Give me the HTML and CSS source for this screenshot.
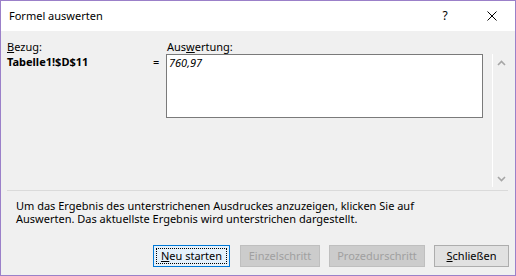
FILE: index.html
```html
<!DOCTYPE html>
<html lang="de">
<head>
<meta charset="utf-8">
<title>Formel auswerten</title>
<link rel="stylesheet" href="styles.css">
</head>
<body>
<div class="window">
  <div class="titlebar">
    <span class="title">Formel auswerten</span>
    <div class="caption-btns">
      <span class="cbtn help">?</span>
      <span class="cbtn close">
        <svg width="10" height="10" viewBox="0 0 10 10"><path d="M0.5 0.5 L9.5 9.5 M9.5 0.5 L0.5 9.5" stroke="#000" stroke-width="1" fill="none"/></svg>
      </span>
    </div>
  </div>
  <div class="content">
    <div class="eval">
      <div class="col-ref">
        <div class="lbl"><u>B</u>ezug:</div>
        <div class="ref">Tabelle1!$D$11</div>
      </div>
      <div class="col-eq">
        <div class="lbl"></div>
        <div class="eq">=</div>
      </div>
      <div class="col-val">
        <div class="lbl">Aus<u>w</u>ertung:</div>
        <div class="box"><span class="val">760,97</span></div>
      </div>
      <div class="col-scroll">
        <div class="lbl"></div>
        <div class="scroll">
          <svg class="chev" width="9" height="6" viewBox="0 0 9 6"><path d="M1 5 L4.5 1.5 L8 5" stroke="#a6a6a6" stroke-width="1.6" fill="none"/></svg>
          <svg class="chev" width="9" height="6" viewBox="0 0 9 6"><path d="M1 1 L4.5 4.5 L8 1" stroke="#a6a6a6" stroke-width="1.6" fill="none"/></svg>
        </div>
      </div>
    </div>
    <div class="sep"></div>
    <p class="hint"><span class="hl">Um das Ergebnis des unterstrichenen Ausdruckes anzuzeigen, klicken Sie auf</span><span class="hl">Auswerten. Das aktuellste Ergebnis wird unterstrichen dargestellt.</span></p>
    <div class="buttons">
      <button class="btn focus b1"><u>N</u>eu starten</button>
      <button class="btn disabled b2">Einzelschritt</button>
      <button class="btn disabled b3">Prozedurschritt</button>
      <button class="btn b4"><u>S</u>chließen</button>
    </div>
  </div>
</div>
</body>
</html>
```
FILE: styles.css
```css
html, body {
  margin: 0;
  padding: 0;
  background: #ffffff;
}
body {
  font-family: "Noto Sans", "Open Sans", sans-serif;
  font-size: 11px;
  color: #000;
}
.window {
  width: 516px;
  height: 276px;
  box-sizing: border-box;
  border: 1px solid #9b80c9;
  display: flex;
  flex-direction: column;
  overflow: hidden;
}
.titlebar {
  height: 30px;
  flex: none;
  background: #fff;
  display: flex;
  align-items: center;
}
.title {
  padding-left: 8px;
  padding-bottom: 1px;
  font-size: 11px;
  flex: 1;
}
.caption-btns {
  display: flex;
  height: 30px;
}
.cbtn {
  width: 46px;
  height: 30px;
  display: flex;
  align-items: center;
  justify-content: center;
}
.help {
  font-size: 12px;
  padding-bottom: 1px;
  padding-right: 2px;
  box-sizing: border-box;
}
.close svg { display: block; }
.content {
  flex: 1;
  background: #f0f0f0;
  display: flex;
  flex-direction: column;
  padding: 8px 0 8px 0;
}
.eval {
  display: flex;
  padding-left: 6px;
}
.lbl {
  height: 15px;
  line-height: 15px;
}
.col-ref { width: 146px; }
.ref {
  font-weight: bold;
  line-height: 15px;
}
.col-eq { width: 13px; }
.eq { line-height: 15px; }
.col-val { width: 317px; }
.col-val .lbl { padding-left: 1px; }
.box {
  height: 64px;
  box-sizing: border-box;
  border: 1px solid #7a7a7a;
  background: #fff;
  padding: 0 2px;
  line-height: 15px;
}
.val { font-style: italic; }
.col-scroll {
  width: 17px;
  margin-left: 9px;
}
.scroll {
  height: 133px;
  box-sizing: border-box;
  border-left: 1px solid #ffffff;
  display: flex;
  flex-direction: column;
  justify-content: space-between;
  align-items: center;
  padding: 6px 0 5px 0;
}
.chev { display: block; }
.sep {
  margin: 3px 7px 0 6px;
  height: 1px;
  background: #dadada;
}
.hint {
  margin: 8px 0 0 15px;
  display: flex;
  flex-direction: column;
}
.hl {
  display: block;
  height: 13px;
  line-height: 13px;
}
.buttons {
  margin-top: auto;
  display: flex;
  justify-content: flex-end;
  gap: 9px;
  padding-right: 6px;
}
.btn {
  height: 22px;
  box-sizing: border-box;
  font-family: inherit;
  font-size: 11px;
  padding: 0;
  margin: 0;
  border: 1px solid #adadad;
  background: #e1e1e1;
  color: #000;
  line-height: 18px;
}
.b1 { width: 77px; }
.b2 { width: 80px; margin-left: 1px; }
.b3 { width: 96px; }
.b4 { width: 75px; }
.focus {
  border-color: #0078d7;
  background: #e5f1fb;
  outline: 1px dotted #000;
  outline-offset: -4px;
}
.disabled {
  background: #cccccc;
  border-color: #bfbfbf;
  color: #a0a0a0;
}
```
